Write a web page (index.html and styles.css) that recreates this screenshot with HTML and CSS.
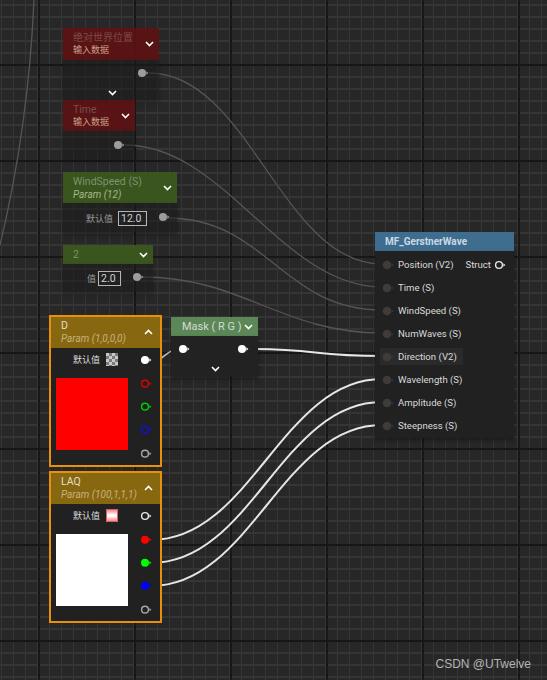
FILE: index.html
```html
<!DOCTYPE html>
<html lang="zh">
<head>
<meta charset="utf-8">
<title>Material Graph</title>
<link rel="stylesheet" href="styles.css">
</head>
<body>
<div class="canvas">
  <svg class="wires" width="547" height="680" viewBox="0 0 547 680">
    <path class="w-faint" d="M34 0 C 30 90, 18 170, 0 245"/>
    <path class="w-faint" d="M149 73 C 249 73, 282 264, 382 264"/>
    <path class="w-faint" d="M125 145 C 225 145, 282 287, 382 287"/>
    <path class="w-faint" d="M167 218 C 267 218, 282 310, 382 310"/>
    <path class="w-faint" d="M142 277 C 242 277, 282 333, 382 333"/>
    <path class="w-mid" d="M151 361 C 165 361, 166 349, 179 349"/>
    <path class="w-bright" d="M248 349 C 320 349, 310 356, 382 356"/>
    <path class="w-bright" d="M151 540 C 251 540, 282 379, 382 379"/>
    <path class="w-bright" d="M151 563 C 251 563, 282 402, 382 402"/>
    <path class="w-bright" d="M151 586 C 251 586, 282 425, 382 425"/>
  </svg>

  <!-- 绝对世界位置 -->
  <div class="node dim pos-world">
    <div class="head head-red">
      <div class="titles">
        <div class="t-main t-red">绝对世界位置</div>
        <div class="t-sub t-redsub">输入数据</div>
      </div>
      <svg class="chev" width="9" height="6" viewBox="0 0 9 6"><path d="M1 1 L4.5 4.5 L8 1"/></svg>
    </div>
    <div class="body body-world">
      <div class="pinrow">
        <svg class="pin p-gray" width="12" height="10" viewBox="0 0 12 10"><circle cx="5" cy="5" r="4"/><path d="M9.4 3.3 L11.4 5 L9.4 6.7Z"/></svg>
      </div>
      <svg class="chev chev-center" width="9" height="6" viewBox="0 0 9 6"><path d="M1 1 L4.5 4.5 L8 1"/></svg>
    </div>
  </div>

  <!-- Time -->
  <div class="node dim pos-time">
    <div class="head head-red">
      <div class="titles">
        <div class="t-main t-red lat">Time</div>
        <div class="t-sub t-redsub">输入数据</div>
      </div>
      <svg class="chev" width="9" height="6" viewBox="0 0 9 6"><path d="M1 1 L4.5 4.5 L8 1"/></svg>
    </div>
    <div class="body body-time">
      <svg class="pin p-gray" width="12" height="10" viewBox="0 0 12 10"><circle cx="5" cy="5" r="4"/><path d="M9.4 3.3 L11.4 5 L9.4 6.7Z"/></svg>
    </div>
  </div>

  <!-- WindSpeed -->
  <div class="node dim pos-wind">
    <div class="head head-green">
      <div class="titles">
        <div class="t-main t-green lat">WindSpeed (S)</div>
        <div class="t-sub t-greensub it">Param (12)</div>
      </div>
      <svg class="chev" width="9" height="6" viewBox="0 0 9 6"><path d="M1 1 L4.5 4.5 L8 1"/></svg>
    </div>
    <div class="body body-val body-wind">
      <span class="lbl lbl-dim">默认值</span>
      <span class="valbox">12.0</span>
      <svg class="pin p-gray" width="12" height="10" viewBox="0 0 12 10"><circle cx="5" cy="5" r="4"/><path d="M9.4 3.3 L11.4 5 L9.4 6.7Z"/></svg>
    </div>
  </div>

  <!-- 2 -->
  <div class="node dim pos-two">
    <div class="head head-green head-slim">
      <div class="t-main t-green lat">2</div>
      <svg class="chev" width="9" height="6" viewBox="0 0 9 6"><path d="M1 1 L4.5 4.5 L8 1"/></svg>
    </div>
    <div class="body body-val body-two">
      <span class="lbl lbl-dim">值</span>
      <span class="valbox">2.0</span>
      <svg class="pin p-gray" width="12" height="10" viewBox="0 0 12 10"><circle cx="5" cy="5" r="4"/><path d="M9.4 3.3 L11.4 5 L9.4 6.7Z"/></svg>
    </div>
  </div>

  <!-- D -->
  <div class="node sel pos-d">
    <div class="head head-gold">
      <div class="titles">
        <div class="t-main t-gold lat">D</div>
        <div class="t-sub t-goldsub it">Param (1,0,0,0)</div>
      </div>
      <svg class="chev chev-up" width="9" height="6" viewBox="0 0 9 6"><path d="M1 5 L4.5 1.5 L8 5"/></svg>
    </div>
    <div class="body body-param">
      <div class="toprow">
        <span class="lbl">默认值</span>
        <span class="swatch sw-checker"></span>
        <svg class="pin p-white" width="12" height="10" viewBox="0 0 12 10"><circle cx="5" cy="5" r="4"/><path d="M9.4 3.3 L11.4 5 L9.4 6.7Z"/></svg>
      </div>
      <div class="pmain">
        <div class="preview pv-red"></div>
        <div class="pincol">
          <svg class="pin ring r-red" width="12" height="10" viewBox="0 0 12 10"><circle cx="5" cy="5" r="3.4"/><path d="M9.4 3.3 L11.4 5 L9.4 6.7Z"/></svg>
          <svg class="pin ring r-green" width="12" height="10" viewBox="0 0 12 10"><circle cx="5" cy="5" r="3.4"/><path d="M9.4 3.3 L11.4 5 L9.4 6.7Z"/></svg>
          <svg class="pin ring r-blue" width="12" height="10" viewBox="0 0 12 10"><circle cx="5" cy="5" r="3.4"/><path d="M9.4 3.3 L11.4 5 L9.4 6.7Z"/></svg>
          <svg class="pin ring r-gray" width="12" height="10" viewBox="0 0 12 10"><circle cx="5" cy="5" r="3.4"/><path d="M9.4 3.3 L11.4 5 L9.4 6.7Z"/></svg>
        </div>
      </div>
    </div>
  </div>

  <!-- LAQ -->
  <div class="node sel pos-laq">
    <div class="head head-gold">
      <div class="titles">
        <div class="t-main t-gold lat">LAQ</div>
        <div class="t-sub t-goldsub it">Param (100,1,1,1)</div>
      </div>
      <svg class="chev chev-up" width="9" height="6" viewBox="0 0 9 6"><path d="M1 5 L4.5 1.5 L8 5"/></svg>
    </div>
    <div class="body body-param">
      <div class="toprow">
        <span class="lbl">默认值</span>
        <span class="swatch sw-pink"></span>
        <svg class="pin ring r-white" width="12" height="10" viewBox="0 0 12 10"><circle cx="5" cy="5" r="3.4"/><path d="M9.4 3.3 L11.4 5 L9.4 6.7Z"/></svg>
      </div>
      <div class="pmain">
        <div class="preview pv-white"></div>
        <div class="pincol">
          <svg class="pin f-red" width="12" height="10" viewBox="0 0 12 10"><circle cx="5" cy="5" r="4"/><path d="M9.4 3.3 L11.4 5 L9.4 6.7Z"/></svg>
          <svg class="pin f-green" width="12" height="10" viewBox="0 0 12 10"><circle cx="5" cy="5" r="4"/><path d="M9.4 3.3 L11.4 5 L9.4 6.7Z"/></svg>
          <svg class="pin f-blue" width="12" height="10" viewBox="0 0 12 10"><circle cx="5" cy="5" r="4"/><path d="M9.4 3.3 L11.4 5 L9.4 6.7Z"/></svg>
          <svg class="pin ring r-gray" width="12" height="10" viewBox="0 0 12 10"><circle cx="5" cy="5" r="3.4"/><path d="M9.4 3.3 L11.4 5 L9.4 6.7Z"/></svg>
        </div>
      </div>
    </div>
  </div>

  <!-- Mask (RG) -->
  <div class="node pos-mask">
    <div class="head head-mask head-slim">
      <div class="t-main t-mask lat">Mask ( R G )</div>
      <svg class="chev" width="9" height="6" viewBox="0 0 9 6"><path d="M1 1 L4.5 4.5 L8 1"/></svg>
    </div>
    <div class="body body-mask">
      <div class="maskpins">
        <svg class="pin p-white" width="12" height="10" viewBox="0 0 12 10"><circle cx="5" cy="5" r="4"/><path d="M9.4 3.3 L11.4 5 L9.4 6.7Z"/></svg>
        <svg class="pin p-white" width="12" height="10" viewBox="0 0 12 10"><circle cx="5" cy="5" r="4"/><path d="M9.4 3.3 L11.4 5 L9.4 6.7Z"/></svg>
      </div>
      <svg class="chev chev-center" width="9" height="6" viewBox="0 0 9 6"><path d="M1 1 L4.5 4.5 L8 1"/></svg>
    </div>
  </div>

  <!-- MF_GerstnerWave -->
  <div class="node pos-mf">
    <div class="head head-blue head-slim">
      <div class="t-main t-blue lat">MF_GerstnerWave</div>
    </div>
    <div class="body body-mf">
      <div class="mfrow">
        <svg class="pin p-dark" width="12" height="10" viewBox="0 0 12 10"><circle cx="5" cy="5" r="4.3"/><path d="M9.6 3.5 L11.4 5 L9.6 6.5Z"/></svg>
        <span class="mflbl">Position (V2)</span>
        <span class="mfout">Struct
          <svg class="pin ring r-white" width="12" height="10" viewBox="0 0 12 10"><circle cx="5" cy="5" r="3.4"/><path d="M9.4 3.3 L11.4 5 L9.4 6.7Z"/></svg>
        </span>
      </div>
      <div class="mfrow">
        <svg class="pin p-dark" width="12" height="10" viewBox="0 0 12 10"><circle cx="5" cy="5" r="4.3"/><path d="M9.6 3.5 L11.4 5 L9.6 6.5Z"/></svg>
        <span class="mflbl">Time (S)</span>
      </div>
      <div class="mfrow">
        <svg class="pin p-dark" width="12" height="10" viewBox="0 0 12 10"><circle cx="5" cy="5" r="4.3"/><path d="M9.6 3.5 L11.4 5 L9.6 6.5Z"/></svg>
        <span class="mflbl">WindSpeed (S)</span>
      </div>
      <div class="mfrow">
        <svg class="pin p-dark" width="12" height="10" viewBox="0 0 12 10"><circle cx="5" cy="5" r="4.3"/><path d="M9.6 3.5 L11.4 5 L9.6 6.5Z"/></svg>
        <span class="mflbl">NumWaves (S)</span>
      </div>
      <div class="mfrow">
        <span class="hover">
          <svg class="pin p-dark" width="12" height="10" viewBox="0 0 12 10"><circle cx="5" cy="5" r="4.3"/><path d="M9.6 3.5 L11.4 5 L9.6 6.5Z"/></svg>
          <span class="mflbl">Direction (V2)</span>
        </span>
      </div>
      <div class="mfrow">
        <svg class="pin p-dark" width="12" height="10" viewBox="0 0 12 10"><circle cx="5" cy="5" r="4.3"/><path d="M9.6 3.5 L11.4 5 L9.6 6.5Z"/></svg>
        <span class="mflbl">Wavelength (S)</span>
      </div>
      <div class="mfrow">
        <svg class="pin p-dark" width="12" height="10" viewBox="0 0 12 10"><circle cx="5" cy="5" r="4.3"/><path d="M9.6 3.5 L11.4 5 L9.6 6.5Z"/></svg>
        <span class="mflbl">Amplitude (S)</span>
      </div>
      <div class="mfrow">
        <svg class="pin p-dark" width="12" height="10" viewBox="0 0 12 10"><circle cx="5" cy="5" r="4.3"/><path d="M9.6 3.5 L11.4 5 L9.6 6.5Z"/></svg>
        <span class="mflbl">Steepness (S)</span>
      </div>
    </div>
  </div>

  <div class="watermark">CSDN @UTwelve</div>
</div>
</body>
</html>
```

FILE: styles.css
```css
* { box-sizing: border-box; }
html, body { margin: 0; padding: 0; background: #262626; }

.canvas {
  position: relative;
  width: 547px;
  height: 680px;
  overflow: hidden;
  font-family: Roboto, "Noto Sans CJK SC", sans-serif;
  background-color: #272727;
  background-image:
    linear-gradient(to right, #171717 2px, transparent 2px),
    linear-gradient(to bottom, #171717 2px, transparent 2px),
    linear-gradient(to right, #353535 1px, transparent 1px),
    linear-gradient(to bottom, #353535 2px, transparent 2px);
  background-size: 96px 96px, 96px 96px, 12px 12px, 12px 12px;
  background-position: 38px 0, 0 64px, 1px 0, 0 4px;
}

.wires { position: absolute; left: 0; top: 0; }
.wires path { fill: none; }
.w-faint { stroke: #555; stroke-width: 1.3; }
.w-mid { stroke: #bdbdbd; stroke-width: 1.6; }
.w-bright { stroke: #e6e6e6; stroke-width: 2; }

/* generic node */
.node { position: absolute; display: flex; flex-direction: column; }
.head { display: flex; align-items: center; justify-content: space-between; padding: 0 5px 0 10px; }
.titles { display: flex; flex-direction: column; }
.t-main { font-size: 10px; line-height: 13px; white-space: nowrap; }
.t-sub { font-size: 9px; line-height: 13px; white-space: nowrap; }
.lat { font-size: 10.5px; }
.it { font-style: italic; font-size: 10px; }

.chev path { fill: none; stroke: #fff; stroke-width: 1.6; }
.chev-center { align-self: center; }

.pin circle, .pin path { fill: #fff; }
.p-gray circle, .p-gray path { fill: #9d9d9d; }
.p-white circle, .p-white path { fill: #fff; }
.p-dark circle, .p-dark path { fill: #3c3c3c; }
.ring circle { fill: none; stroke-width: 1.4; }
.r-red circle { stroke: #e00000; } .r-red path { fill: #e00000; }
.r-green circle { stroke: #00d000; } .r-green path { fill: #00d000; }
.r-blue circle { stroke: #1010e0; } .r-blue path { fill: #1010e0; }
.r-gray circle { stroke: #a8a8a8; } .r-gray path { fill: #a8a8a8; }
.r-white circle { stroke: #e8e8e8; } .r-white path { fill: #e8e8e8; }
.f-red circle, .f-red path { fill: #ff0000; }
.f-green circle, .f-green path { fill: #00ff00; }
.f-blue circle, .f-blue path { fill: #0000ff; }

/* dimmed nodes */
.dim .body { background: rgba(28, 28, 28, 0.55); box-shadow: 0 2px 4px rgba(0,0,0,0.25); }
.head-red { background: rgba(92, 18, 18, 0.92); height: 32px; }
.head-green { background: #3a551d; height: 31px; }
.head-slim { height: 19px; }
.t-red { color: #7c4b4b; }
.t-redsub { color: #c9a08a; }
.t-green { color: #7e9271; }
.t-greensub { color: #a6b88c; }

.pos-world { left: 63px; top: 28px; width: 96px; }
.body-world { height: 40px; display: flex; flex-direction: column; padding-top: 8px; }
.pinrow { display: flex; justify-content: flex-end; padding-right: 10px; height: 10px; }
.body-world .chev-center { margin-top: 12px; margin-left: 2px; }

.pos-time { left: 63px; top: 100px; width: 72px; }
.pos-time .head-red { height: 31px; }
.body-time { height: 27px; display: flex; justify-content: flex-end; align-items: flex-start; padding: 9px 10px 0 0; }

.pos-wind { left: 63px; top: 172px; width: 114px; }
.body-val { display: flex; align-items: center; }
.body-wind { height: 30px; padding-left: 23px; }
.lbl { font-size: 9px; color: #dcdcdc; white-space: nowrap; }
.lbl-dim { color: #9a9a9a; }
.valbox {
  font-size: 10.5px; color: #cfcfcf; border: 1px solid #b5b5b5;
  line-height: 13px; padding: 0 2px; margin-left: 5px;
}
.body-wind .valbox { width: 29px; }
.body-wind .pin { margin-left: 11px; margin-top: -2px; }

.pos-two { left: 63px; top: 245px; width: 90px; }
.body-two { height: 28px; padding-left: 24px; }
.body-two .valbox { width: 23px; margin-left: 2px; }
.body-two .pin { margin-left: 11px; margin-top: -2px; }

/* selected param nodes */
.sel { border: 2px solid #e8900c; background: #212121; }
.head-gold { background: #876810; height: 31px; padding-left: 10px; padding-right: 7px; }
.t-gold { color: #e6ddc8; }
.t-goldsub { color: #c7b07e; }
.pos-d { left: 49px; top: 315px; width: 113px; height: 152px; }
.pos-laq { left: 49px; top: 471px; width: 113px; height: 152px; }
.body-param { display: flex; flex-direction: column; }
.toprow { height: 24px; display: flex; align-items: center; justify-content: flex-end; padding-right: 8px; }
.toprow .lbl { margin-right: 6px; }
.swatch { width: 12px; height: 13px; margin-right: 22px; }
.sw-checker {
  background-color: #c8c8c8;
  background-image: conic-gradient(#7a7a7a 25%, #c8c8c8 0 50%, #7a7a7a 0 75%, #c8c8c8 0);
  background-size: 6px 6px;
}
.sw-pink { background: linear-gradient(to bottom, #f08a8a, #ffffff 45%, #ffffff 55%, #f08a8a); border: 1px solid #e06060; }
.pmain { display: flex; justify-content: space-between; padding-left: 5px; padding-right: 8px; }
.preview { width: 72px; height: 72px; margin-top: 6px; }
.pv-red { background: #ff0000; }
.pv-white { background: #ffffff; }
.pincol { display: flex; flex-direction: column; }
.pincol .pin { height: 23.33px; }

/* mask */
.pos-mask { left: 171px; top: 317px; width: 87px; }
.head-mask { background: #5c8858; padding-left: 11px; padding-right: 5px; }
.t-mask { color: #d3dcd2; font-size: 11px; }
.body-mask { height: 41px; background: #222; display: flex; flex-direction: column; box-shadow: 0 2px 4px rgba(0,0,0,0.35); }
.maskpins { display: flex; justify-content: space-between; padding: 8px 9px 0 7px; }
.body-mask .chev-center { margin-top: 12px; margin-left: 2px; }

/* MF */
.pos-mf { left: 375px; top: 232px; width: 139px; }
.head-blue { background: #3f6d8f; padding-left: 10px; }
.t-blue { color: #c9d9e6; font-weight: bold; font-size: 10px; }
.body-mf { height: 187px; background: #212121; padding-top: 2px; box-shadow: 0 2px 4px rgba(0,0,0,0.35); }
.mfrow { height: 23px; display: flex; align-items: center; padding-left: 7px; }
.mflbl { font-size: 9.6px; color: #dadada; margin-left: 4px; white-space: nowrap; }
.mfout { margin-left: auto; margin-right: 8px; display: flex; align-items: center; font-size: 9.6px; color: #dadada; gap: 3px; }
.hover { display: flex; align-items: center; background: #2a2a2a; margin-left: -2px; padding: 3px 6px 3px 2px; }

.watermark {
  position: absolute; right: 16px; top: 657px;
  font-family: "Liberation Sans", Arial, sans-serif; font-size: 12px; color: #b4b4b4;
}
```
